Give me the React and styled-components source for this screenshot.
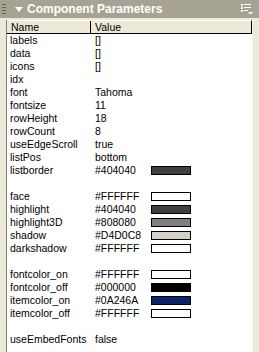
import React from 'react'
import styled, { createGlobalStyle } from 'styled-components'

const Global = createGlobalStyle`
    html, body {
        margin: 0;
        padding: 0;
        background: #ECE9D8;
    }
`

const Panel = styled.div`
    width: 259px;
    height: 352px;
    background: #ECE9D8;
    display: flex;
    flex-direction: column;
    overflow: hidden;
    font-family: "Liberation Sans", Arial, sans-serif;
`

const TitleBar = styled.div`
    height: 18px;
    flex: none;
    background: #A6A394;
    display: flex;
    align-items: center;
    padding: 0 6px 0 2px;
    color: #fff;
`

const Grip = styled.div`
    width: 4px;
    height: 12px;
    margin-right: 9px;
    background-image: radial-gradient(circle, #66645a 0.9px, transparent 1px);
    background-size: 2px 3px;
`

const Title = styled.span`
    font-weight: 700;
    font-size: 12px;
    margin-left: 4px;
    flex: 1;
`

const Body = styled.div`
    flex: 1;
    display: flex;
    padding-top: 2px;
`

const Gutter = styled.div`
    width: ${p => p.w}px;
    flex: none;
`

const Table = styled.div`
    flex: 1;
    background: #fff;
    border-left: 1px solid #808080;
    border-right: 1px solid #f6f4ea;
    display: flex;
    flex-direction: column;
`

const Row = styled.div`
    display: grid;
    grid-template-columns: 84px 1fr;
    height: 13px;
    font-size: 10.5px;
    line-height: 13px;
    color: #000;
`

const HeadRow = styled(Row)`
    height: 12px;
    line-height: 12px;
    background: #ECE9D8;
    border-top: 1px solid #fff;
    border-bottom: 1px solid #000;
    border-right: 1px solid #000;
`

const HeadCell = styled.div`
    padding-left: ${p => p.pad}px;
    border-right: ${p => (p.divider ? '1px solid #000' : 'none')};
`

const Cell = styled.div`
    padding-left: ${p => p.pad}px;
    display: flex;
    align-items: center;
    white-space: nowrap;
`

const ValueText = styled.span`
    width: 56px;
    flex: none;
`

const Swatch = styled.span`
    width: 38px;
    height: 7px;
    border: 1px solid #000;
    background: ${p => p.color};
`

const MenuIcon = () => (
    <svg width="12" height="12" viewBox="0 0 12 12">
        <rect x="0" y="1" width="2" height="2" fill="#fff" />
        <rect x="3" y="1" width="7" height="1" fill="#fff" />
        <rect x="0" y="4" width="2" height="2" fill="#fff" />
        <rect x="3" y="4" width="7" height="1" fill="#fff" />
        <rect x="0" y="7" width="2" height="2" fill="#fff" />
        <rect x="3" y="7" width="4" height="1" fill="#fff" />
        <polygon points="7,9 12,9 9.5,11.5" fill="#fff" />
    </svg>
)

const Arrow = () => (
    <svg width="8" height="5" viewBox="0 0 8 5">
        <polygon points="0,0 8,0 4,5" fill="#fff" />
    </svg>
)

const params = [
    ['labels', '[]'],
    ['data', '[]'],
    ['icons', '[]'],
    ['idx', ''],
    ['font', 'Tahoma'],
    ['fontsize', '11'],
    ['rowHeight', '18'],
    ['rowCount', '8'],
    ['useEdgeScroll', 'true'],
    ['listPos', 'bottom'],
    ['listborder', '#404040', true],
    ['', ''],
    ['face', '#FFFFFF', true],
    ['highlight', '#404040', true],
    ['highlight3D', '#808080', true],
    ['shadow', '#D4D0C8', true],
    ['darkshadow', '#FFFFFF', true],
    ['', ''],
    ['fontcolor_on', '#FFFFFF', true],
    ['fontcolor_off', '#000000', true],
    ['itemcolor_on', '#0A246A', true],
    ['itemcolor_off', '#FFFFFF', true],
    ['', ''],
    ['useEmbedFonts', 'false'],
]

const App = () => {
    return (
        <Panel>
            <Global />
            <TitleBar>
                <Grip />
                <Arrow />
                <Title>Component Parameters</Title>
                <MenuIcon />
            </TitleBar>
            <Body>
                <Gutter w={6} />
                <Table>
                    <HeadRow>
                        <HeadCell pad={4} divider>Name</HeadCell>
                        <HeadCell pad={4}>Value</HeadCell>
                    </HeadRow>
                    {params.map(([name, value, swatch], i) => (
                        <Row key={i}>
                            <Cell pad={3}>{name}</Cell>
                            <Cell pad={4}>
                                <ValueText>{value}</ValueText>
                                {swatch && <Swatch color={value} />}
                            </Cell>
                        </Row>
                    ))}
                </Table>
                <Gutter w={6} />
            </Body>
        </Panel>
    )
}

export default App
